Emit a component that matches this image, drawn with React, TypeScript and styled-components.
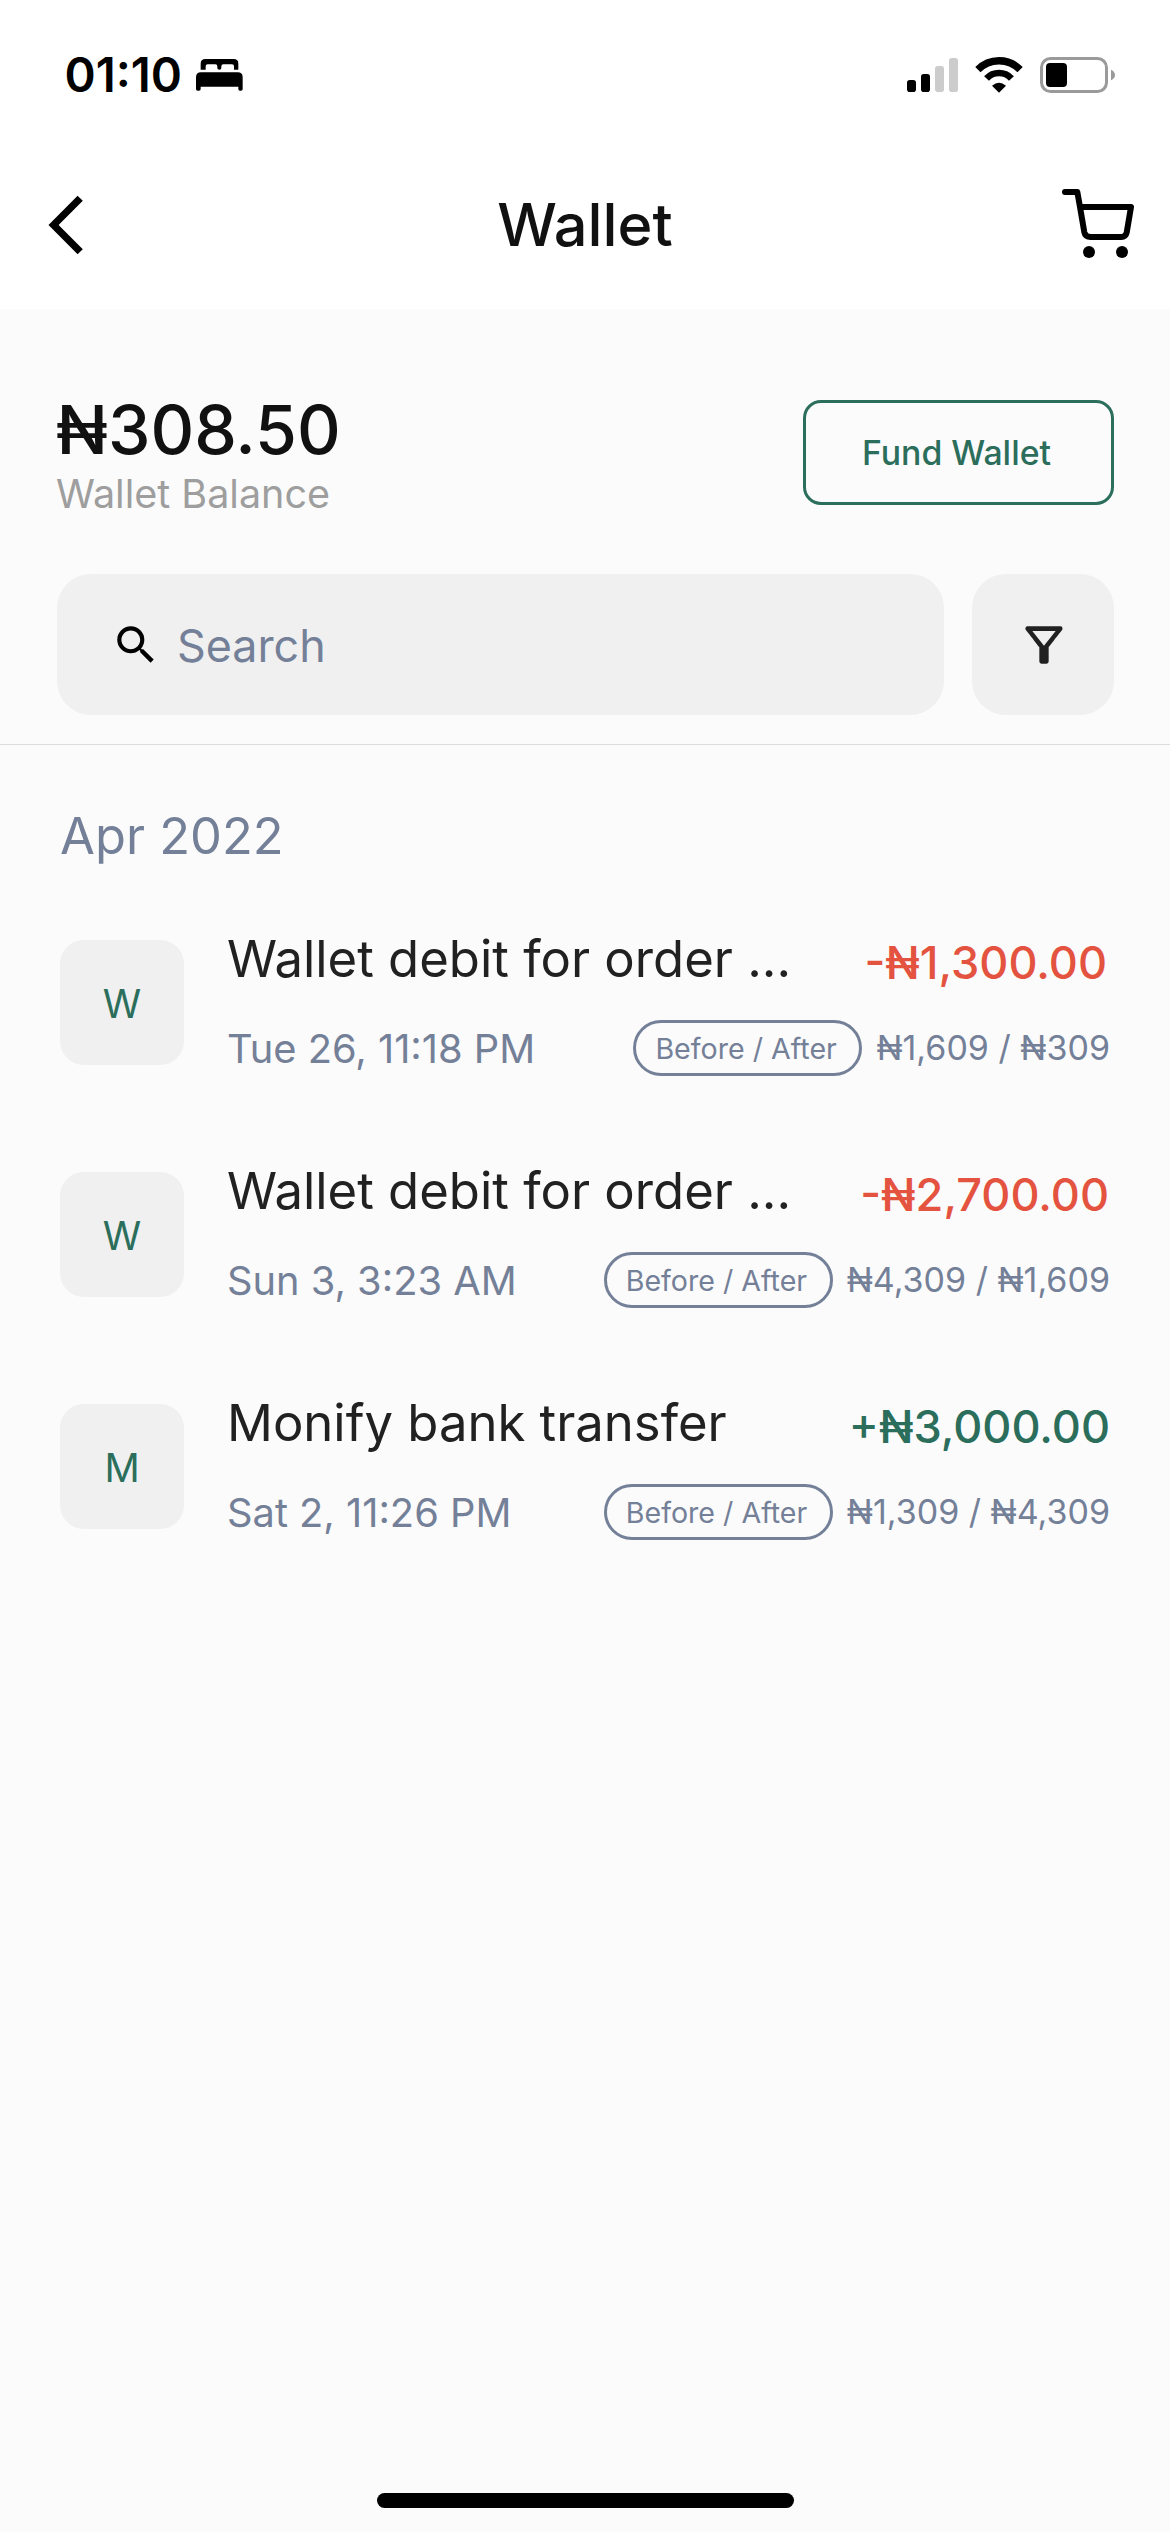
import React from "react";
import styled, { createGlobalStyle } from "styled-components";
import { MdSearch } from "react-icons/md";

const colors = {
  ink: "#111111",
  text: "#212121",
  muted: "#9e9e9e",
  slate: "#748098",
  green: "#2b6e5b",
  red: "#e4533f",
  page: "#fbfbfb",
  field: "#f0f0f0",
  line: "#dcdcdc",
};

const GlobalStyle = createGlobalStyle`
  *, *::before, *::after { box-sizing: border-box; }
  body {
    margin: 0;
    background: ${colors.page};
    font-family: Inter, "Liberation Sans", sans-serif;
  }
  svg { display: block; flex: none; }
  button, input { font: inherit; }
`;

const Screen = styled.div`
  width: 1170px;
  height: 2532px;
  display: flex;
  flex-direction: column;
  overflow: hidden;
  background: ${colors.page};
`;

const StatusBar = styled.div`
  height: 149px;
  padding: 0 55px 0 64.5px;
  display: flex;
  align-items: center;
  justify-content: space-between;
  background: #ffffff;
`;

const ClockGroup = styled.div`
  display: flex;
  align-items: center;
  gap: 14px;
`;

const Clock = styled.span`
  font-size: 47.3px;
  font-weight: 600;
  line-height: 60px;
  color: #000000;
`;

const Indicators = styled.div`
  display: flex;
  align-items: flex-start;
  gap: 17px;
`;

const NavBar = styled.header`
  height: 160px;
  padding: 0 36px 8px 48px;
  display: grid;
  grid-template-columns: 1fr auto 1fr;
  align-items: center;
  background: #ffffff;
`;

const NavTitle = styled.h1`
  margin: 0;
  padding: 0 12px 2px 0;
  font-size: 59.5px;
  font-weight: 500;
  line-height: 72px;
  color: ${colors.ink};
`;

const IconButton = styled.button<{ $end?: boolean }>`
  padding: 0;
  border: 0;
  background: none;
  color: #000000;
  justify-self: ${(p) => (p.$end ? "end" : "start")};
  padding-bottom: ${(p) => (p.$end ? "3px" : "0")};
`;

const Summary = styled.section`
  padding: 88px 56px 29px;
  border-bottom: 1px solid ${colors.line};
`;

const BalanceRow = styled.div`
  display: flex;
  align-items: flex-start;
  justify-content: space-between;
`;

const Balance = styled.div`
  font-size: 67.8px;
  font-weight: 500;
  line-height: 65px;
  color: ${colors.ink};
`;

const BalanceLabel = styled.div`
  height: 63px;
  font-size: 39.5px;
  line-height: 65px;
  color: ${colors.muted};
`;

const FundButton = styled.button`
  width: 311px;
  height: 105px;
  margin-top: 3px;
  padding: 0 4px 0 0;
  border: 3px solid ${colors.green};
  border-radius: 18px;
  background: transparent;
  font-size: 33.8px;
  font-weight: 500;
  color: ${colors.green};
`;

const SearchRow = styled.div`
  margin: 49px 0 0 1px;
  display: flex;
  gap: 28px;
`;

const SearchField = styled.label`
  flex: 1;
  height: 141px;
  padding-left: 54px;
  display: flex;
  align-items: center;
  gap: 16px;
  border-radius: 34px;
  background: ${colors.field};
`;

const SearchInput = styled.input`
  flex: 1;
  min-width: 0;
  height: 60px;
  padding: 0;
  margin-top: 2px;
  border: 0;
  outline: 0;
  background: transparent;
  font-size: 44.8px;
  color: ${colors.text};
  &::placeholder {
    color: ${colors.slate};
    opacity: 1;
  }
`;

const FilterButton = styled.button`
  width: 142px;
  height: 141px;
  padding: 0 0 0 2px;
  display: flex;
  align-items: center;
  justify-content: center;
  border: 0;
  border-radius: 34px;
  background: ${colors.field};
  color: ${colors.text};
`;

const History = styled.section`
  flex: 1;
  padding: 60px 60px 0;
`;

const Month = styled.h2`
  margin: 0 0 62px;
  font-size: 50.6px;
  font-weight: 400;
  line-height: 61px;
  color: ${colors.slate};
`;

const TransactionList = styled.div`
  display: flex;
  flex-direction: column;
  gap: 84px;
`;

const TransactionRow = styled.article`
  height: 148px;
  display: flex;
  gap: 43px;
`;

const Avatar = styled.div`
  width: 124px;
  height: 125px;
  margin-top: 12px;
  padding-top: 2px;
  flex: none;
  display: flex;
  align-items: center;
  justify-content: center;
  border-radius: 24px;
  background: ${colors.field};
  font-size: 39px;
  line-height: 48px;
  color: ${colors.green};
`;

const Details = styled.div`
  flex: 1;
  min-width: 0;
  display: flex;
  flex-direction: column;
  justify-content: space-between;
`;

const Line = styled.div`
  display: flex;
  align-items: center;
  justify-content: space-between;
  white-space: nowrap;
`;

const Title = styled.div`
  font-size: 50.8px;
  line-height: 61px;
  color: ${colors.text};
`;

const Amount = styled.div<{ $credit: boolean; $inset: number }>`
  padding: 8px ${(p) => p.$inset}px 0 0;
  font-size: 45.1px;
  font-weight: 500;
  line-height: 53px;
  color: ${(p) => (p.$credit ? colors.green : colors.red)};
`;

const DateText = styled.div`
  height: 56px;
  font-size: 39.8px;
  line-height: 58px;
  color: ${colors.slate};
`;

const Change = styled.div`
  display: flex;
  align-items: center;
  gap: 14px;
`;

const Badge = styled.span`
  width: 229px;
  height: 56px;
  padding-left: 19px;
  border: 3px solid ${colors.slate};
  border-radius: 28px;
  font-size: 28.6px;
  line-height: 51px;
  color: ${colors.slate};
`;

const Range = styled.span`
  font-size: 34px;
  line-height: 56px;
  color: ${colors.slate};
`;

const Footer = styled.footer`
  padding-bottom: 24px;
  display: flex;
  justify-content: center;
`;

const HomeIndicator = styled.div`
  width: 417px;
  height: 15px;
  border-radius: 8px;
  background: #000000;
`;

const BedIcon = () => (
  <svg width="47" height="32" viewBox="33 57 141 96" fill="#000">
    <path d="M47 89V71Q47 57 61 57H146Q160 57 160 71V89H147V79Q147 73 141 73H115Q109 73 109 79V84Q109 89 103 89Q97 89 97 84V79Q97 73 91 73H68Q62 73 62 79V89Z" />
    <path d="M33 112Q33 97 48 97H158Q173 97 173 112V147Q173 152 168 152H165Q160 152 160 147V140H47V147Q47 152 42 152H38Q33 152 33 147Z" />
  </svg>
);

const SignalIcon = () => (
  <svg width="51" height="36" viewBox="0 0 51 36">
    <rect x="0" y="23" width="9" height="12" rx="2.8" fill="#000" />
    <rect x="14" y="17" width="9" height="18" rx="2.8" fill="#000" />
    <rect x="28" y="9" width="9" height="26" rx="2.8" fill="#ccc" />
    <rect x="42" y="1" width="9" height="34" rx="2.8" fill="#ccc" />
  </svg>
);

const WifiIcon = () => (
  <svg width="48" height="36" viewBox="45 45 144 108" fill="none" stroke="#000">
    <path d="M53.7 83A88 88 0 0 1 180.3 83" strokeWidth="22" />
    <path d="M79.7 109.2A51 51 0 0 1 154.3 109.2" strokeWidth="20" />
    <path d="M117 152L96 131Q117 113 138 131Z" fill="#000" stroke="none" />
  </svg>
);

const BatteryIcon = () => (
  <svg width="75" height="36" viewBox="0 0 75 36">
    <rect x="1.5" y="1.5" width="65" height="33" rx="9" fill="none" stroke="#9a9a9a" strokeWidth="3" />
    <rect x="6" y="6" width="21" height="24" rx="4" fill="#000" />
    <path d="M71 12.7Q75 14.5 75 18T71 23.3Z" fill="#9a9a9a" />
  </svg>
);

const BackIcon = () => (
  <svg width="35" height="60" viewBox="48 195 35 60" fill="currentColor">
    <path d="M77.6 195.7L82.8 200.7L58.6 225L82.8 249.3L77.6 254.3L48.5 225Z" />
  </svg>
);

const CartIcon = () => (
  <svg width="72" height="69" viewBox="36 27 216 207" fill="currentColor">
    <path
      d="M45 36H82L90 81L103 157Q106 171 122 171H214Q227 171 230 158L243 81H90"
      fill="none"
      stroke="currentColor"
      strokeWidth="18"
      strokeLinecap="round"
      strokeLinejoin="round"
    />
    <circle cx="117" cy="216" r="18" />
    <circle cx="216" cy="216" r="18" />
  </svg>
);

const FilterIcon = () => (
  <svg width="56" height="56" viewBox="0 0 24 24" fill="currentColor">
    <path d="M7 6h10l-5.01 6.3L7 6zM4.25 5.61C6.27 8.2 10 13 10 13v6c0 .55.45 1 1 1h2c.55 0 1-.45 1-1v-6s3.72-4.8 5.74-7.39C20.25 4.95 19.78 4 18.95 4H5.04C4.21 4 3.74 4.95 4.25 5.61z" />
  </svg>
);

interface Transaction {
  initial: string;
  title: string;
  date: string;
  amount: string;
  range: string;
  credit: boolean;
  inset: number;
}

const transactions: Transaction[] = [
  {
    initial: "W",
    title: "Wallet debit for order ...",
    date: "Tue 26, 11:18 PM",
    amount: "-₦1,300.00",
    range: "₦1,609 / ₦309",
    credit: false,
    inset: 3,
  },
  {
    initial: "W",
    title: "Wallet debit for order ...",
    date: "Sun 3, 3:23 AM",
    amount: "-₦2,700.00",
    range: "₦4,309 / ₦1,609",
    credit: false,
    inset: 1,
  },
  {
    initial: "M",
    title: "Monify bank transfer",
    date: "Sat 2, 11:26 PM",
    amount: "+₦3,000.00",
    range: "₦1,309 / ₦4,309",
    credit: true,
    inset: 0,
  },
];

export default function App() {
  return (
    <Screen>
      <GlobalStyle />
      <StatusBar>
        <ClockGroup>
          <Clock>01:10</Clock>
          <BedIcon />
        </ClockGroup>
        <Indicators>
          <SignalIcon />
          <WifiIcon />
          <BatteryIcon />
        </Indicators>
      </StatusBar>
      <NavBar>
        <IconButton aria-label="Back">
          <BackIcon />
        </IconButton>
        <NavTitle>Wallet</NavTitle>
        <IconButton aria-label="Cart" $end>
          <CartIcon />
        </IconButton>
      </NavBar>
      <Summary>
        <BalanceRow>
          <div>
            <Balance>₦308.50</Balance>
            <BalanceLabel>Wallet Balance</BalanceLabel>
          </div>
          <FundButton>Fund Wallet</FundButton>
        </BalanceRow>
        <SearchRow>
          <SearchField>
            <MdSearch size={50} color="#000" />
            <SearchInput placeholder="Search" />
          </SearchField>
          <FilterButton aria-label="Filter">
            <FilterIcon />
          </FilterButton>
        </SearchRow>
      </Summary>
      <History>
        <Month>Apr 2022</Month>
        <TransactionList>
          {transactions.map((t) => (
            <TransactionRow key={t.date}>
              <Avatar>{t.initial}</Avatar>
              <Details>
                <Line>
                  <Title>{t.title}</Title>
                  <Amount $credit={t.credit} $inset={t.inset}>
                    {t.amount}
                  </Amount>
                </Line>
                <Line>
                  <DateText>{t.date}</DateText>
                  <Change>
                    <Badge>Before / After</Badge>
                    <Range>{t.range}</Range>
                  </Change>
                </Line>
              </Details>
            </TransactionRow>
          ))}
        </TransactionList>
      </History>
      <Footer>
        <HomeIndicator />
      </Footer>
    </Screen>
  );
}
